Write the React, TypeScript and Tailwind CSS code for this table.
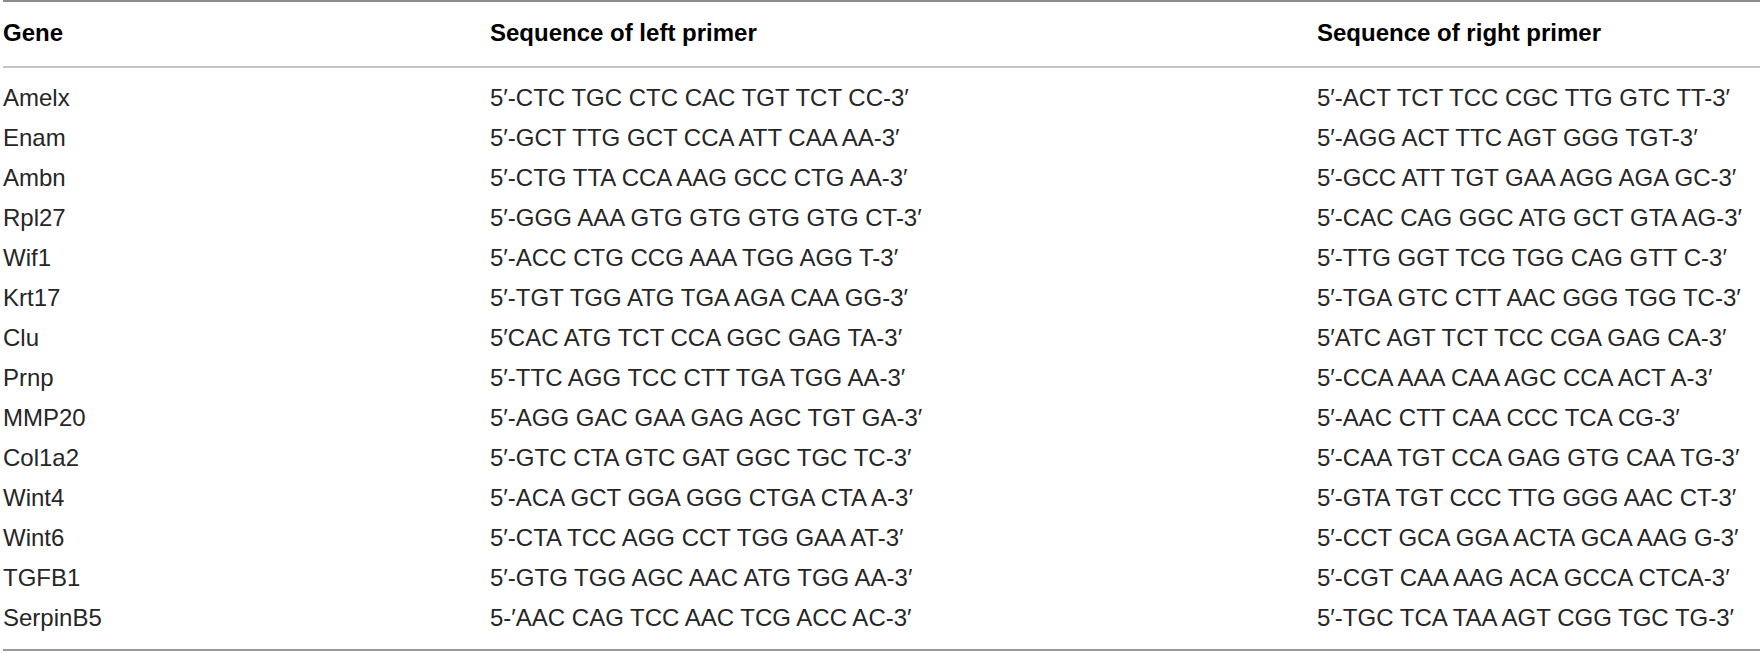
const rows: [string, string, string][] = [
  ['Amelx', '5′-CTC TGC CTC CAC TGT TCT CC-3′', '5′-ACT TCT TCC CGC TTG GTC TT-3′'],
  ['Enam', '5′-GCT TTG GCT CCA ATT CAA AA-3′', '5′-AGG ACT TTC AGT GGG TGT-3′'],
  ['Ambn', '5′-CTG TTA CCA AAG GCC CTG AA-3′', '5′-GCC ATT TGT GAA AGG AGA GC-3′'],
  ['Rpl27', '5′-GGG AAA GTG GTG GTG GTG CT-3′', '5′-CAC CAG GGC ATG GCT GTA AG-3′'],
  ['Wif1', '5′-ACC CTG CCG AAA TGG AGG T-3′', '5′-TTG GGT TCG TGG CAG GTT C-3′'],
  ['Krt17', '5′-TGT TGG ATG TGA AGA CAA GG-3′', '5′-TGA GTC CTT AAC GGG TGG TC-3′'],
  ['Clu', '5′CAC ATG TCT CCA GGC GAG TA-3′', '5′ATC AGT TCT TCC CGA GAG CA-3′'],
  ['Prnp', '5′-TTC AGG TCC CTT TGA TGG AA-3′', '5′-CCA AAA CAA AGC CCA ACT A-3′'],
  ['MMP20', '5′-AGG GAC GAA GAG AGC TGT GA-3′', '5′-AAC CTT CAA CCC TCA CG-3′'],
  ['Col1a2', '5′-GTC CTA GTC GAT GGC TGC TC-3′', '5′-CAA TGT CCA GAG GTG CAA TG-3′'],
  ['Wint4', '5′-ACA GCT GGA GGG CTGA CTA A-3′', '5′-GTA TGT CCC TTG GGG AAC CT-3′'],
  ['Wint6', '5′-CTA TCC AGG CCT TGG GAA AT-3′', '5′-CCT GCA GGA ACTA GCA AAG G-3′'],
  ['TGFB1', '5′-GTG TGG AGC AAC ATG TGG AA-3′', '5′-CGT CAA AAG ACA GCCA CTCA-3′'],
  ['SerpinB5', '5-′AAC CAG TCC AAC TCG ACC AC-3′', '5′-TGC TCA TAA AGT CGG TGC TG-3′'],
]

export default function App() {
  return (
    <div className="w-[1760px] h-[653px] bg-white overflow-hidden font-['Liberation_Sans',Arial,sans-serif] text-[24px] text-[#262626]">
      <div className="ml-[3px] border-t-2 border-[#8c8c8c]">
        {/* Header */}
        <div className="grid grid-cols-[487px_827px_1fr] h-[66px] items-center pb-[3px] font-bold text-black border-b-2 border-[#c4c4c4]">
          <div>Gene</div>
          <div>Sequence of left primer</div>
          <div>Sequence of right primer</div>
        </div>

        {/* Body */}
        <div className="pt-[10px] pb-[11px] border-b-2 border-[#9a9a9a]">
          {rows.map(([gene, left, right]) => (
            <div key={gene} className="grid grid-cols-[487px_827px_1fr] h-[40px] items-center whitespace-nowrap">
              <div>{gene}</div>
              <div>{left}</div>
              <div>{right}</div>
            </div>
          ))}
        </div>
      </div>
    </div>
  )
}
